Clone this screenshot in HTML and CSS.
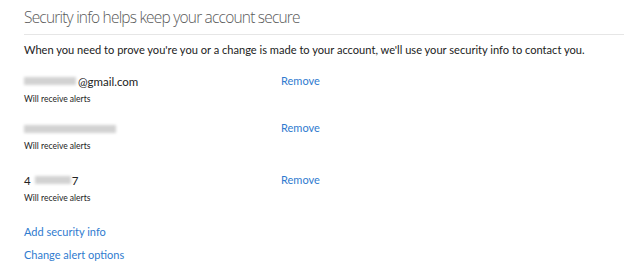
FILE: index.html
```html
<!DOCTYPE html>
<html>
<head>
    <title>Security info</title>
    <link rel="stylesheet" href="styles.css">
</head>
<body>
    <div class="page">
        <h1 class="title">Security info helps keep your account secure</h1>
        <p class="intro">When you need to prove you're you or a change is made to your account, we'll use your security info to contact you.</p>

        <div class="proof">
            <div class="proof-info">
                <div class="proof-name"><span class="blur blur-email"></span>@gmail.com</div>
                <div class="proof-note">Will receive alerts</div>
            </div>
            <a class="link" href="#">Remove</a>
        </div>
        <div class="proof">
            <div class="proof-info">
                <div class="proof-name"><span class="blur blur-long"></span></div>
                <div class="proof-note">Will receive alerts</div>
            </div>
            <a class="link" href="#">Remove</a>
        </div>
        <div class="proof third">
            <div class="proof-info">
                <div class="proof-name">4<span class="blur blur-phone"></span>7</div>
                <div class="proof-note">Will receive alerts</div>
            </div>
            <a class="link" href="#">Remove</a>
        </div>

        <div class="actions">
            <a class="link" href="#">Add security info</a>
            <a class="link" href="#">Change alert options</a>
        </div>
    </div>
</body>
</html>
```

FILE: styles.css
```css
body {
    margin: 0;
    background: #fff;
    font-family: Lato, "Liberation Sans", sans-serif;
    color: #222;
}

.page {
    padding: 6px 0 0 24px;
}

.title {
    margin: 0;
    padding-bottom: 6px;
    border-bottom: 1px solid #e6e6e6;
    font-family: "Open Sans", Lato, sans-serif;
    font-size: 15.5px;
    font-weight: 300;
    line-height: 22px;
    letter-spacing: -0.8px;
    color: #5a5a5a;
}

.intro {
    margin: 7px 0 0;
    font-size: 11.1px;
    line-height: 16px;
}

.proof {
    display: grid;
    grid-template-columns: 257px auto;
    align-items: start;
    margin-top: 14px;
}

.proof.third {
    margin-top: 19px;
}

.proof-name {
    display: flex;
    align-items: center;
    height: 18px;
    font-size: 11.5px;
}

.proof-note {
    margin-top: 3px;
    font-size: 8.5px;
    line-height: 12px;
}

.blur {
    display: inline-block;
    height: 8px;
    background: #d2d2d2;
    filter: blur(1.5px);
}

.blur-email { width: 52px; margin-right: 2px; }
.blur-long { width: 92px; margin-top: 2px; }
.blur-phone { width: 36px; margin: 0 1px 0 4px; }

.link {
    color: #2f7bcf;
    text-decoration: none;
    font-size: 11px;
    line-height: 18px;
}

.actions {
    display: flex;
    flex-direction: column;
    align-items: flex-start;
    gap: 5px;
    margin-top: 19px;
}
```
